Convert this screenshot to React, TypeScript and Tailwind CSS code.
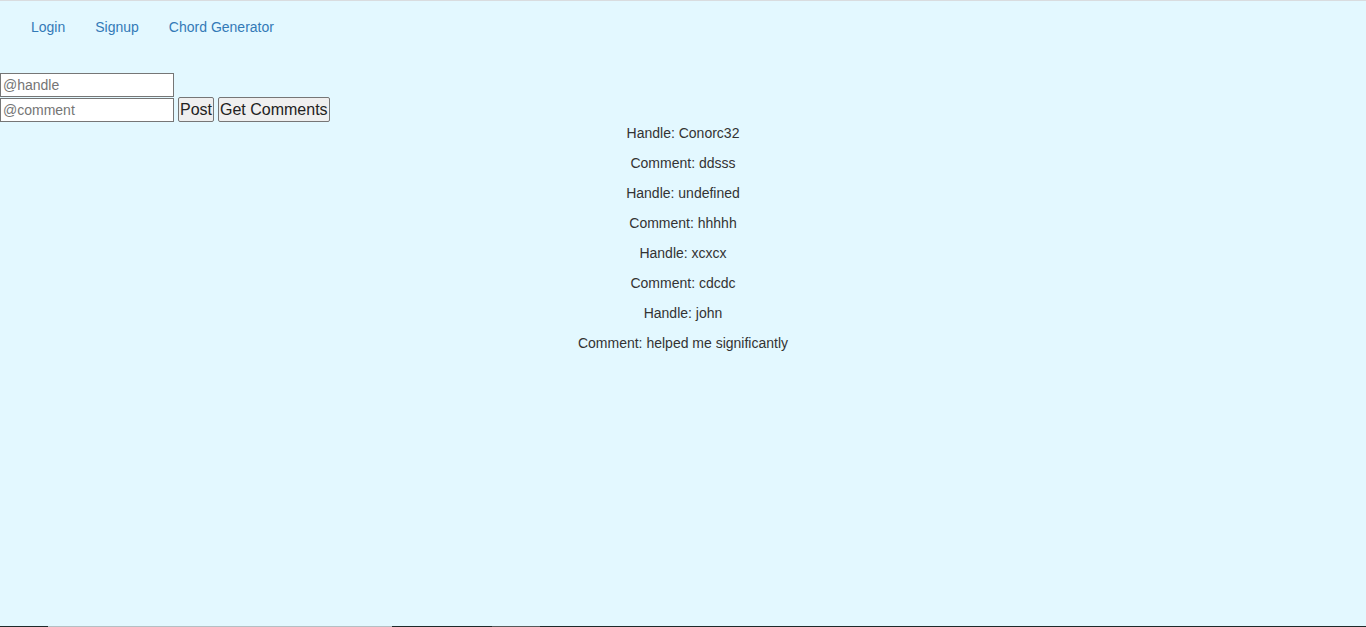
const comments = [
  { handle: "Conorc32", comment: "ddsss" },
  { handle: "undefined", comment: "hhhhh" },
  { handle: "xcxcx", comment: "cdcdc" },
  { handle: "john", comment: "helped me significantly" },
];

const NavBar = () => (
  <nav className="flex h-[50px] px-[16px]">
    {["Login", "Signup", "Chord Generator"].map((label) => (
      <a
        key={label}
        href="#"
        className="px-[15px] pt-[16px] text-[14px] leading-[20px] text-[#337ab7]"
      >
        {label}
      </a>
    ))}
  </nav>
);

export default function App() {
  return (
    <div className="flex h-[627px] flex-col overflow-hidden bg-[#e3f8ff] font-['Liberation_Sans',Arial,sans-serif] text-[#333]">
      <div className="h-px bg-[#d9dcdf]" />
      <NavBar />

      <main className="flex-1 pt-[22px]">
        <div>
          <input
            placeholder="@handle"
            className="h-[24px] w-[174px] border border-[#767676] bg-white px-[2px] text-[14px] text-black outline-none placeholder:text-[#757575]"
          />
        </div>
        <div className="flex items-start gap-[4px]">
          <input
            placeholder="@comment"
            className="mt-px h-[24px] w-[174px] border border-[#767676] bg-white px-[2px] text-[14px] text-black outline-none placeholder:text-[#757575]"
          />
          <button className="h-[25px] rounded-[2px] border border-[#767676] bg-[#efefef] px-px text-[16px] leading-none text-[#222]">
            Post
          </button>
          <button className="h-[25px] rounded-[2px] border border-[#767676] bg-[#efefef] px-px text-[16px] leading-none text-[#222]">
            Get Comments
          </button>
        </div>

        <div className="pt-px text-center text-[14px] leading-[20px]">
          {comments.map((c) => (
            <div key={c.handle + c.comment}>
              <p className="mb-[10px]">Handle: {c.handle}</p>
              <p className="mb-[10px]">Comment: {c.comment}</p>
            </div>
          ))}
        </div>
      </main>

      {/* sliver of the taskbar captured at the bottom edge */}
      <div className="flex h-px">
        <div className="w-[48px] bg-[#1e2a2a]" />
        <div className="w-[344px] bg-[#b4c0c4]" />
        <div className="w-[100px] bg-[#1e2a2a]" />
        <div className="w-[48px] bg-[#555a5a]" />
        <div className="flex-1 bg-[#1e2a2a]" />
      </div>
    </div>
  );
}
